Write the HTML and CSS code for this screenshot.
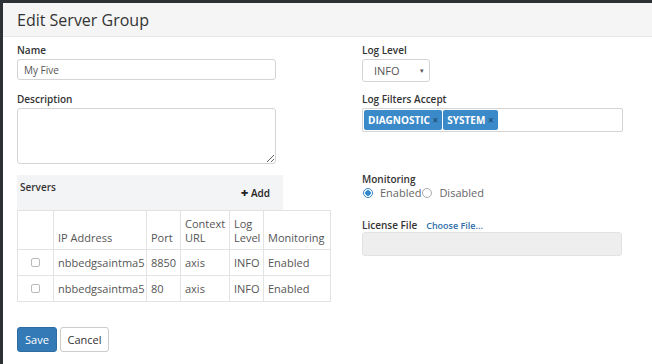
FILE: index.html
```html
<!DOCTYPE html>
<html lang="en">
  <head>
    <meta charset="UTF-8" />
    <title>Edit Server Group</title>
    <link rel="stylesheet" href="styles.css">
  </head>
  <body>
    <div class="modal">
      <div class="modal-header">
        <h3>Edit Server Group</h3>
      </div>

      <div class="modal-body">
        <div class="col-left">
          <label class="field-label">Name</label>
          <input type="text" class="text-input" value="My Five" />

          <label class="field-label">Description</label>
          <textarea class="text-area"></textarea>

          <div class="servers-bar">
            <span class="servers-title">Servers</span>
            <span class="add-link"><b>+</b> Add</span>
          </div>

          <table class="servers-table">
            <colgroup>
              <col style="width: 36px" />
              <col style="width: 93px" />
              <col style="width: 34px" />
              <col style="width: 49px" />
              <col style="width: 34px" />
              <col style="width: 67px" />
            </colgroup>
            <thead>
              <tr>
                <th></th>
                <th>IP Address</th>
                <th>Port</th>
                <th>Context URL</th>
                <th>Log Level</th>
                <th>Monitoring</th>
              </tr>
            </thead>
            <tbody>
              <tr>
                <td class="chk-col"><span class="check"></span></td>
                <td>nbbedgsaintma5</td>
                <td>8850</td>
                <td>axis</td>
                <td>INFO</td>
                <td>Enabled</td>
              </tr>
              <tr>
                <td class="chk-col"><span class="check"></span></td>
                <td>nbbedgsaintma5</td>
                <td>80</td>
                <td>axis</td>
                <td>INFO</td>
                <td>Enabled</td>
              </tr>
            </tbody>
          </table>

          <div class="actions">
            <button class="btn btn-primary">Save</button>
            <button class="btn btn-default">Cancel</button>
          </div>
        </div>

        <div class="col-right">
          <label class="field-label">Log Level</label>
          <div class="select-box">INFO <span class="caret">&#9662;</span></div>

          <label class="field-label">Log Filters Accept</label>
          <div class="tag-box">
            <span class="tag">DIAGNOSTIC <i>&times;</i></span>
            <span class="tag">SYSTEM <i>&times;</i></span>
          </div>

          <label class="field-label monitoring-label">Monitoring</label>
          <div class="radios">
            <span class="radio checked"></span><span class="radio-text">Enabled</span>
            <span class="radio"></span><span class="radio-text">Disabled</span>
          </div>

          <div class="license-row">
            <label class="field-label">License File</label>
            <a class="choose-link">Choose File...</a>
          </div>
          <div class="file-box"></div>
        </div>
      </div>
    </div>
  </body>
</html>
```

FILE: styles.css
```css
* {
  box-sizing: border-box;
}

body {
  margin: 0;
  font-family: "Open Sans", Arial, sans-serif;
  font-size: 11px;
  color: #555;
  background: #fff;
}

.modal {
  height: 364px;
  border-top: 3px solid #2d3035;
  border-left: 3px solid #2d3035;
  background: #fff;
}

.modal-header {
  height: 34px;
  background: #f5f5f5;
  border-bottom: 1px solid #e8e8e8;
  padding-left: 14px;
}

.modal-header h3 {
  margin: 0;
  font-size: 16px;
  font-weight: normal;
  line-height: 34px;
  color: #333;
}

.modal-body {
  display: flex;
  padding: 6px 0 0 14px;
}

.col-left {
  width: 345px;
}

.col-right {
  width: 262px;
}

.field-label {
  display: block;
  font-weight: 600;
  color: #333;
  font-size: 10px;
  line-height: 14px;
  margin-bottom: 2px;
}

.text-input {
  display: block;
  width: 259px;
  height: 21px;
  border: 1px solid #d4d4d4;
  border-radius: 3px;
  padding: 0 6px;
  font-family: inherit;
  font-size: 10px;
  color: #555;
  margin-bottom: 12px;
}

.text-area {
  display: block;
  width: 259px;
  height: 56px;
  border: 1px solid #d4d4d4;
  border-radius: 3px;
  margin: 0 0 11px;
  resize: vertical;
}

.servers-bar {
  width: 266px;
  height: 35px;
  background: #f3f4f6;
  display: flex;
  justify-content: space-between;
  padding: 5px 13px 0 3px;
  font-size: 10px;
}

.servers-title {
  font-weight: 600;
  color: #333;
}

.add-link {
  font-weight: 600;
  color: #222;
  margin-top: 3px;
}

.add-link b {
  font-size: 13px;
}

.servers-table {
  border-collapse: collapse;
  table-layout: fixed;
  width: 313px;
  margin-bottom: 25px;
}

.servers-table th,
.servers-table td {
  border: 1px solid #e3e3e3;
  padding: 0 4px;
  text-align: left;
  font-weight: normal;
  color: #555;
  line-height: 14px;
  white-space: nowrap;
}

.servers-table th {
  height: 39px;
  vertical-align: bottom;
  padding-bottom: 4px;
  white-space: normal;
}

.servers-table td {
  height: 26px;
}

.servers-table .chk-col {
  text-align: center;
}

.check {
  display: inline-block;
  width: 9px;
  height: 9px;
  border: 1px solid #bbb;
  border-radius: 2px;
}

.actions {
  display: flex;
  gap: 3px;
}

.btn {
  height: 25px;
  border-radius: 3px;
  font-family: inherit;
  font-size: 11px;
  padding: 0 10px;
  cursor: pointer;
}

.btn-primary {
  width: 40px;
  background: #337ab7;
  border: 1px solid #2e6da4;
  color: #fff;
  padding: 0;
}

.btn-default {
  width: 49px;
  background: #fff;
  border: 1px solid #ccc;
  color: #333;
  padding: 0;
}

.select-box {
  width: 68px;
  height: 23px;
  border: 1px solid #d4d4d4;
  border-radius: 3px;
  padding-left: 11px;
  line-height: 21px;
  color: #555;
  margin-bottom: 10px;
  position: relative;
}

.caret {
  position: absolute;
  right: 5px;
  font-size: 7px;
}

.tag-box {
  width: 261px;
  height: 24px;
  border: 1px solid #d4d4d4;
  border-radius: 2px;
  padding: 1px;
  display: flex;
  gap: 1px;
}

.tag {
  background: #3a89c9;
  color: #fff;
  font-weight: bold;
  font-size: 10px;
  line-height: 20px;
  padding: 0 4px;
  border-radius: 2px;
}

.tag i {
  font-style: normal;
  font-weight: normal;
  color: #1c3f5e;
}

.monitoring-label {
  margin-top: 40px;
  margin-bottom: 0;
}

.radios {
  display: flex;
  align-items: center;
  line-height: 14px;
  color: #666;
  margin-bottom: 18px;
}

.radio {
  width: 10px;
  height: 10px;
  border: 1px solid #aaa;
  border-radius: 50%;
  margin: 0 4px 0 1px;
}

.radio.checked {
  border-color: #2f86d1;
  background: radial-gradient(circle, #2f86d1 0 2.5px, #fff 3px);
}

.radio-text {
  margin-left: 3px;
}

.license-row {
  display: flex;
  align-items: baseline;
  gap: 9px;
}

.license-row .field-label {
  margin-bottom: 0;
}

.choose-link {
  color: #2f6ea8;
  font-size: 9px;
  font-weight: 600;
}

.file-box {
  width: 260px;
  height: 24px;
  background: #eee;
  border: 1px solid #e2e2e2;
  border-radius: 3px;
}
```
